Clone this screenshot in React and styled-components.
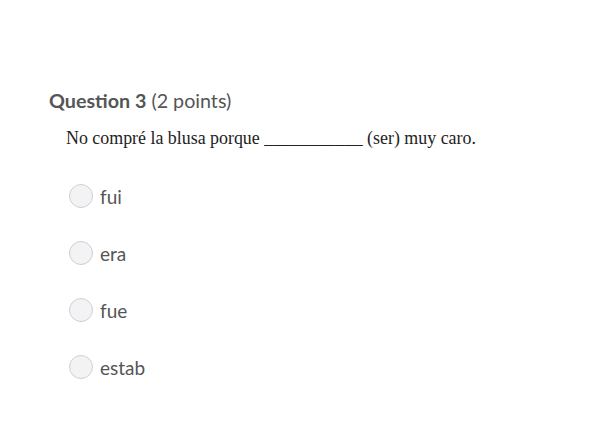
import React from "react"
import styled, { createGlobalStyle } from "styled-components"

const GlobalStyle = createGlobalStyle`
  html, body {
    margin: 0;
    padding: 0;
    background: #ffffff;
  }
`

const Page = styled.div`
  width: 590px;
  height: 439px;
  box-sizing: border-box;
  padding: 89px 0 0 49px;
  background: #ffffff;
`

const QuestionTitle = styled.h2`
  margin: 0;
  font-family: "Lato", sans-serif;
  font-size: 19.7px;
  font-weight: 400;
  color: #555555;
  line-height: 24px;
  strong {
    font-weight: 700;
  }
`

const Prompt = styled.p`
  margin: 14px 0 0 17px;
  font-family: "Liberation Serif", serif;
  font-size: 17.9px;
  line-height: 22px;
  color: #222222;
`

const Options = styled.ul`
  list-style: none;
  margin: 35px 0 0 20px;
  padding: 0;
  display: flex;
  flex-direction: column;
  gap: 33px;
`

const Option = styled.li`
  display: flex;
  align-items: center;
  gap: 7px;
  height: 24px;
  font-family: "Lato", sans-serif;
  font-size: 19px;
  color: #555555;
`

const Radio = styled.span`
  width: 22px;
  height: 22px;
  border-radius: 50%;
  border: 1px solid #cfcfcf;
  background: #f3f3f5;
  flex-shrink: 0;
`

const choices = ["fui", "era", "fue", "estab"]

export default function App() {
  return (
    <>
      <GlobalStyle />
      <Page>
        <QuestionTitle>
          <strong>Question 3</strong> (2 points)
        </QuestionTitle>
        <Prompt>No compré la blusa porque ___________ (ser) muy caro.</Prompt>
        <Options>
          {choices.map((c) => (
            <Option key={c}>
              <Radio />
              {c}
            </Option>
          ))}
        </Options>
      </Page>
    </>
  )
}
